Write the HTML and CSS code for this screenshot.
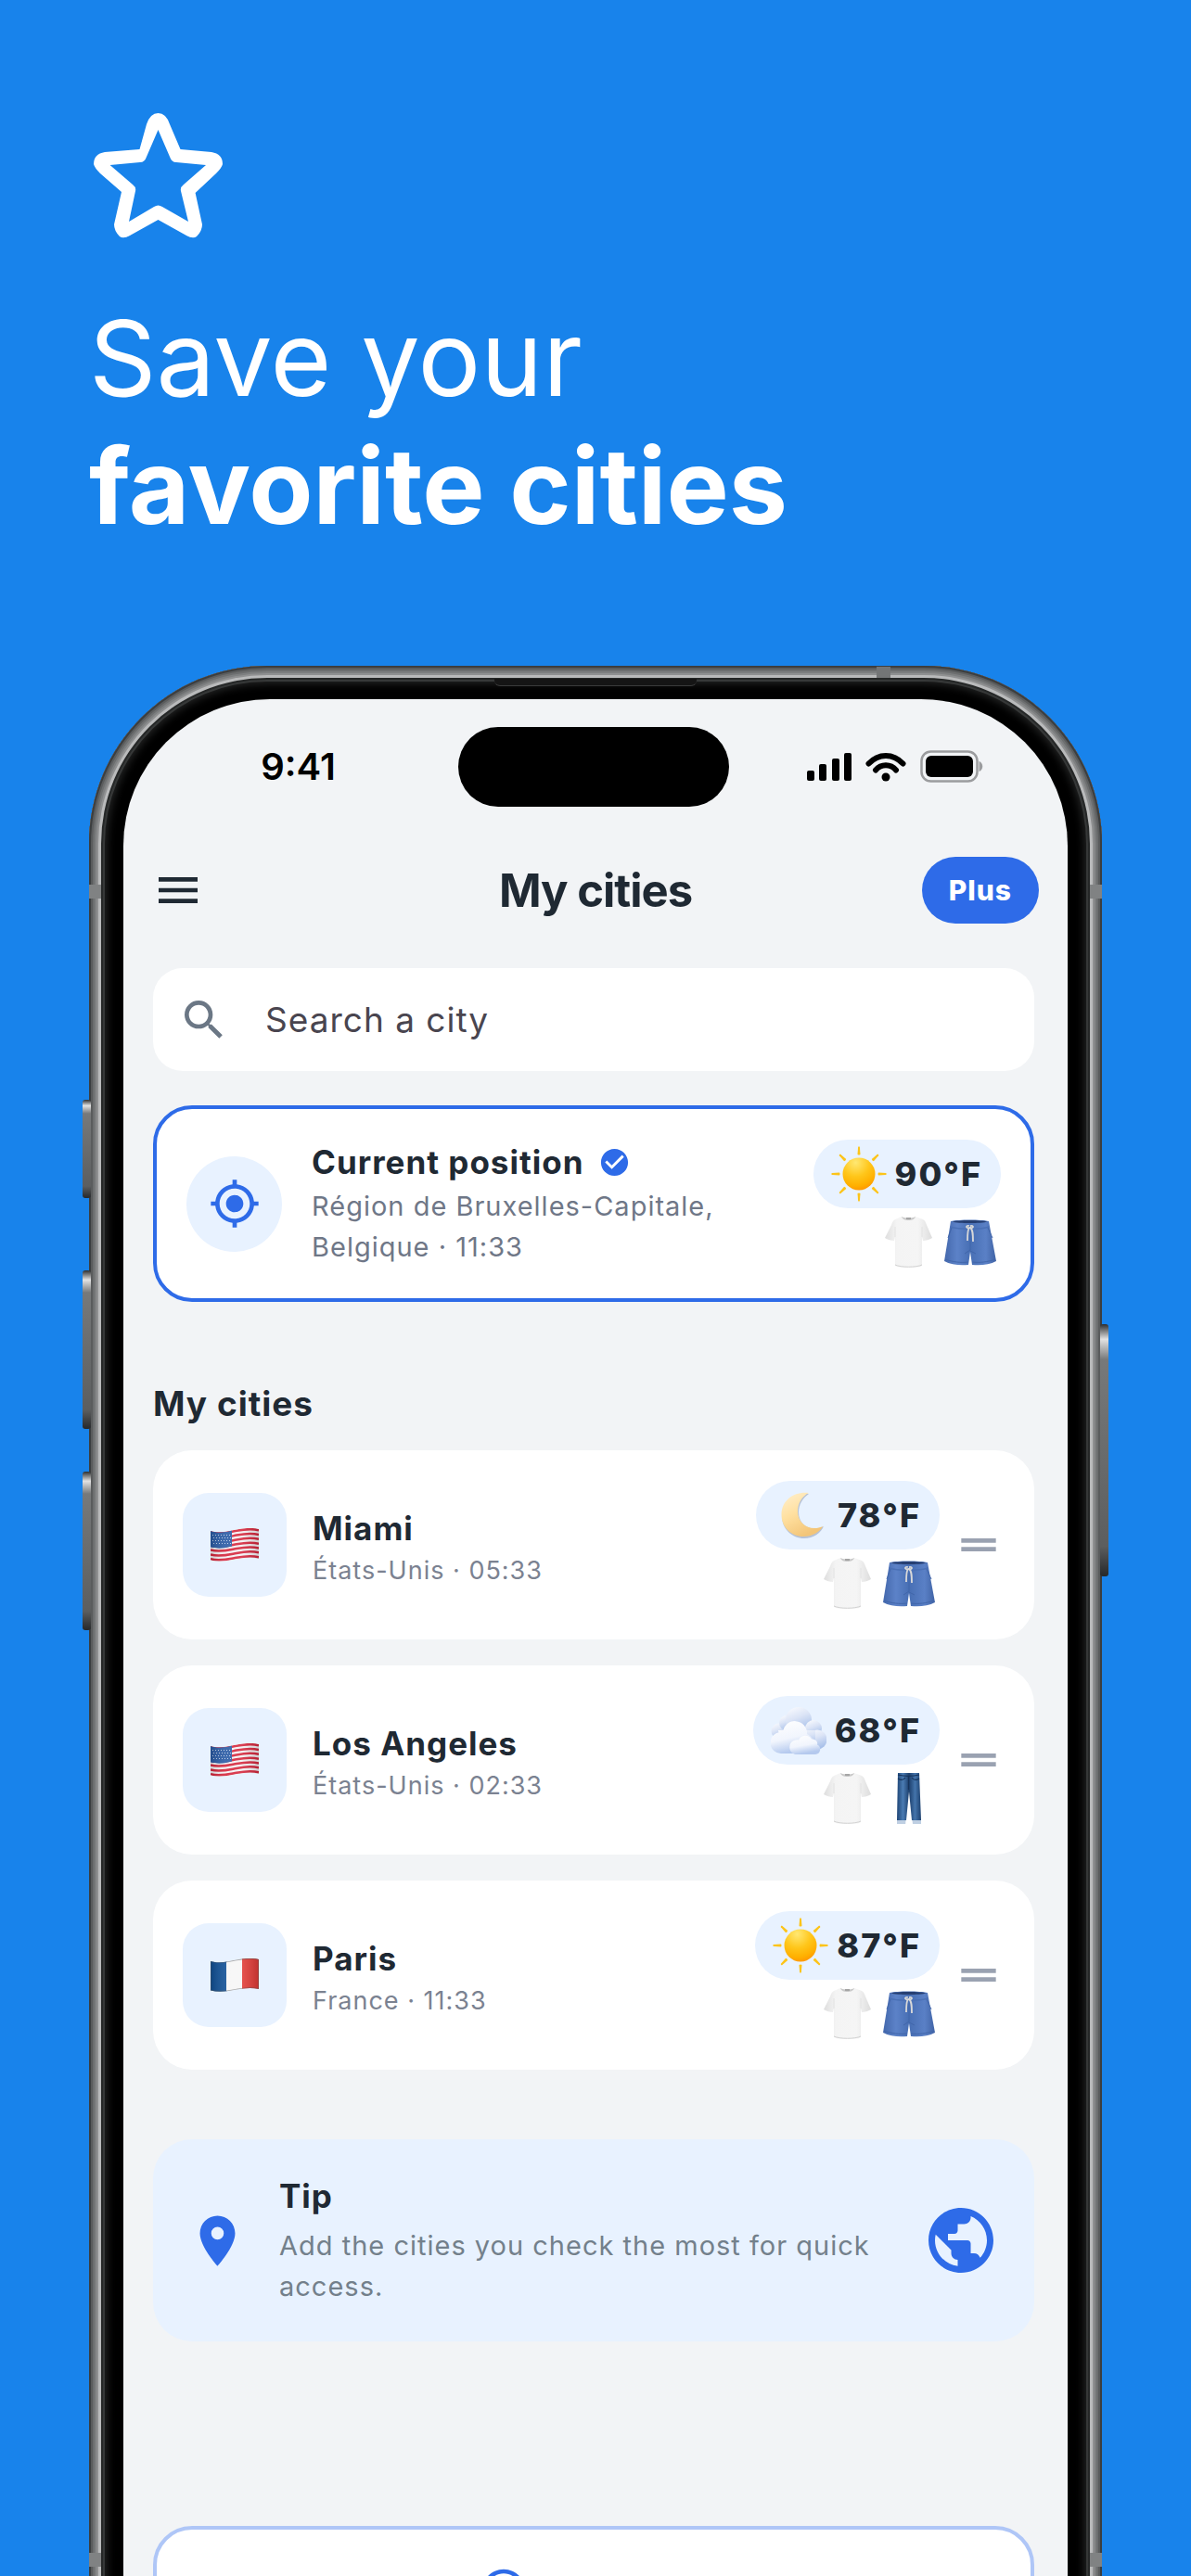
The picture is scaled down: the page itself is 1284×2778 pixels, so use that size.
FILE: index.html
```html
<!DOCTYPE html>
<html lang="en">
<head>
<meta charset="utf-8">
<meta name="viewport" content="width=device-width, initial-scale=1">
<title>Save your favorite cities</title>
<link rel="stylesheet" href="styles.css">
</head>
<body>
<svg class="sprite" aria-hidden="true">
  <defs>
    <radialGradient id="sun-fill" cx="0.4" cy="0.15" r="0.95">
      <stop offset="0" stop-color="#ffe873"/><stop offset="0.45" stop-color="#ffc61a"/><stop offset="0.75" stop-color="#ffb000"/><stop offset="1" stop-color="#ff8a00"/>
    </radialGradient>
    <linearGradient id="moon-fill" x1="0" y1="0" x2="0.5" y2="1">
      <stop offset="0" stop-color="#fff0cf"/><stop offset="0.5" stop-color="#ffe0a0"/><stop offset="1" stop-color="#f3c578"/>
    </linearGradient>
    <linearGradient id="cloud-back" x1="0" y1="0" x2="0.4" y2="1">
      <stop offset="0" stop-color="#fdfdff"/><stop offset="0.5" stop-color="#dbe4f6"/><stop offset="1" stop-color="#a9c1ea"/>
    </linearGradient>
    <linearGradient id="cloud-front" x1="0" y1="0" x2="0.3" y2="1">
      <stop offset="0" stop-color="#ffffff"/><stop offset="0.6" stop-color="#f1f5fd"/><stop offset="1" stop-color="#b4c9ee"/>
    </linearGradient>
    <linearGradient id="shirt-fill" x1="0" y1="0" x2="1" y2="0">
      <stop offset="0" stop-color="#dedede"/><stop offset="0.25" stop-color="#f4f4f4"/><stop offset="0.7" stop-color="#f5f5f5"/><stop offset="1" stop-color="#dddddd"/>
    </linearGradient>
    <linearGradient id="shorts-fill" x1="0" y1="0" x2="1" y2="0">
      <stop offset="0" stop-color="#4468ac"/><stop offset="0.25" stop-color="#5c82c8"/><stop offset="0.5" stop-color="#486fb4"/><stop offset="0.8" stop-color="#5a80c6"/><stop offset="1" stop-color="#4063a5"/>
    </linearGradient>
    <linearGradient id="jeans-fill" x1="0" y1="0" x2="1" y2="0">
      <stop offset="0" stop-color="#1f4576"/><stop offset="0.25" stop-color="#4a7bb2"/><stop offset="0.5" stop-color="#1d406e"/><stop offset="0.75" stop-color="#4373aa"/><stop offset="1" stop-color="#1d416f"/>
    </linearGradient>
    <linearGradient id="flag-shade" x1="0" y1="0" x2="1" y2="0">
      <stop offset="0" stop-color="#000" stop-opacity="0.15"/><stop offset="0.3" stop-color="#fff" stop-opacity="0.1"/><stop offset="0.65" stop-color="#fff" stop-opacity="0.12"/><stop offset="1" stop-color="#000" stop-opacity="0.15"/>
    </linearGradient>
    <clipPath id="flag-clip"><path d="M0 3c10 3 20 0 28-1.500s16-2.500 24-.5V33c-8-2-16-1-24 .5S10 37 0 34.500z"/></clipPath>
  </defs>

  <symbol id="sun" viewBox="0 0 60 60">
    <circle cx="30" cy="30" r="17.500" fill="url(#sun-fill)"/>
    <g fill="#fcc419">
      <path id="ray" d="M28.500 9l.6-8q.9-1.500 1.800 0l.6 8q-1.500 1-3 0z"/>
      <use href="#ray" transform="rotate(45 30 30)"/><use href="#ray" transform="rotate(90 30 30)"/>
      <use href="#ray" transform="rotate(135 30 30)"/><use href="#ray" transform="rotate(180 30 30)"/>
      <use href="#ray" transform="rotate(225 30 30)"/><use href="#ray" transform="rotate(270 30 30)"/>
      <use href="#ray" transform="rotate(315 30 30)"/>
    </g>
  </symbol>

  <symbol id="moon" viewBox="0 0 60 60">
    <path d="M38 7C24 5 9 14 9 31c0 14 11 24 24 24 10 0 18-6 21-13-13 7-27-1-27-15C27 18 32 11 38 7z" fill="#8d9ab5" opacity="0.55"/>
    <path d="M38 6C23 4 8.500 13 8.500 29.500 8.500 43 19 53 32 53c10 0 18-5 21-11-13 6-27-2-27-16 0-9 5-17 12-20z" fill="url(#moon-fill)"/>
  </symbol>

  <symbol id="cloud" viewBox="0 0 60 60">
    <g fill="url(#cloud-back)">
      <circle cx="9" cy="31" r="8.500"/><circle cx="17" cy="22" r="8"/><circle cx="30" cy="19" r="14"/>
      <circle cx="46" cy="28" r="9"/><circle cx="50" cy="40" r="10.500"/><path d="M8 30h40v20H12z"/>
    </g>
    <path d="M12 55a11.500 11.500 0 0 1-2-23c1 0 2 0 3 .3A13 13 0 0 1 39 34c6 3 9 8 7 13s-5 8-9 8z" fill="url(#cloud-front)"/>
    <path d="M26 56a8 8 0 0 1-1-15c2-1 4-1 5-.5a8 8 0 0 1 14-1c5-.5 7 4 6 6a5.500 5.500 0 0 1-2 10.500z" fill="url(#cloud-front)"/>
  </symbol>

  <symbol id="shirt" viewBox="0 0 56 56">
    <path d="M20 1c4 2 11 2 15 0l8 3c2 1 3 3 4 6l6 14c-3 2-7 3-10 3l-1-4v30c0 2-2 3-14 3s-15-1-15-3V23l-1 4c-3 0-7-1-10-3L9 10c1-3 2-5 4-6z" fill="url(#shirt-fill)"/>
    <path d="M20 1c4 2 11 2 15 0-1 3-4 4-7.500 4S21 4 20 1z" fill="#c9c9c9"/>
    <path d="M25 2h5v2h-5z" fill="#a5a5a5"/>
    <path d="M13 12v11M42 12v11" stroke="#e2e2e2" fill="none"/>
    <path d="M13 53c6 3 23 3 29 0" stroke="#d2d2d2" fill="none"/>
  </symbol>

  <symbol id="shorts" viewBox="0 0 56 56">
    <path d="M7 6c8-2 33-2 41 0l8 43c-7 4-17 5-26 4l-2-14-2 14c-9 1-19 0-26-4z" fill="url(#shorts-fill)"/>
    <path d="M8 6.500c8-2 31-2 39 0-8 2-31 2-39 0z" fill="#263f72"/>
    <path d="M6.500 12c9 3 33 3 42 0" stroke="#4a70b6" stroke-width="1.500" fill="none"/>
    <path d="M8 13L4 24M47 13l5 11M28 17v20l-6 4M28 38l6 3" stroke="#4166aa" fill="none"/>
    <path d="M1 47c8 3 17 4 25 3M30 50c8 1 17 0 25-3" stroke="#4166aa" fill="none"/>
    <path d="M27 11c-4-1-4 3 0 2-2 2-2 8-2 14M28 11c4-1 4 3 0 2 3 2 3 8 3 15" stroke="#d8d8d8" stroke-width="1.800" fill="none"/>
  </symbol>

  <symbol id="jeans" viewBox="0 0 56 56">
    <path d="M16 1h23l2 51H31l-3-31-3 31H15z" fill="url(#jeans-fill)"/>
    <path d="M16 3c8 2 15 2 23 0M27.500 4v15M16 7c3 2 6 2 8-1M39 7c-3 2-6 2-8-1" stroke="#16335b" stroke-width="1.200" fill="none"/>
    <path d="M15 52h9.500l-.3 4H15zM31.500 52H41v4h-9z" fill="#bfcfe2"/>
  </symbol>

  <symbol id="flag-us" viewBox="0 0 52 37">
    <g clip-path="url(#flag-clip)">
      <path d="M0 0h52v37H0z" fill="#f4f1f3"/>
      <g fill="none" stroke="#d5253b" stroke-width="2.500">
        <path d="M0 4.200c10 3 20 0 28-1.500s16-2.500 24-.5"/><path d="M0 9.100c10 3 20 0 28-1.500s16-2.500 24-.5"/>
        <path d="M0 13.900c10 3 20 0 28-1.500s16-2.500 24-.5"/><path d="M0 18.700c10 3 20 0 28-1.500s16-2.500 24-.5"/>
        <path d="M0 23.500c10 3 20 0 28-1.500s16-2.500 24-.5"/><path d="M0 28.400c10 3 20 0 28-1.500s16-2.500 24-.5"/>
        <path d="M0 33.200c10 3 20 0 28-1.500s16-2.500 24-.5"/>
      </g>
      <path d="M0 3c10 3 17 1 23-.5v17C17 21 10 23 0 20.500z" fill="#2a5ba5"/>
      <path d="M2 7.500h20M3 10.500h20M2 13.500h20M3 16.500h20" stroke="#b9cbe6" stroke-dasharray="1 2" fill="none"/>
      <path d="M0 0h52v37H0z" fill="url(#flag-shade)"/>
    </g>
  </symbol>

  <symbol id="flag-fr" viewBox="0 0 52 37">
    <g clip-path="url(#flag-clip)">
      <path d="M0 0h18v37H0z" fill="#0f4f95"/><path d="M17 0h18v37H17z" fill="#f6f6f6"/><path d="M34 0h18v37H34z" fill="#e23b36"/>
      <path d="M0 0h52v37H0z" fill="url(#flag-shade)"/>
      <path d="M0 3c10 3 20 0 28-1.500s16-2.500 24-.5V33c-8-2-16-1-24 .5S10 37 0 34.500z" fill="none" stroke="#555" stroke-opacity="0.5" stroke-width="1.500"/>
    </g>
  </symbol>

  <symbol id="drag" viewBox="0 0 24 24"><path d="M20 9H4v2h16V9zM4 15h16v-2H4v2z"/></symbol>
</svg>

<div class="poster">
  <header class="intro">
    <svg class="star" viewBox="100 121 141 136" aria-hidden="true">
      <path fill="#fff" fill-rule="evenodd" d="M150.500 161L158 134Q162 122 170.500 122T183 134L194.500 161L228 164Q240 166 240 177Q239 181 233 187L210.600 208L218 242Q218 249 212 255Q208 258 201 254L170.500 237L140 254Q133 258 129 255Q123 249 123 242L131 207L108 187Q102 181 101 177Q101 166 113 164ZM170.500 140L158 169Q156 175 151 175L118.600 178L143 199Q147 202 146 206L139 239L166 223Q170.500 220 175 223L203 239L195 206Q194 202 198 199L222 178L190 175Q185 175 183 169Z"/>
    </svg>
    <h1 class="headline">Save your<br><strong>favorite cities</strong></h1>
  </header>

  <div class="phone">
    <span class="key key-action"></span>
    <span class="key key-up"></span>
    <span class="key key-down"></span>
    <span class="key key-power"></span>
    <span class="band band-left"></span>
    <span class="band band-right"></span>
    <span class="band band-left band-low"></span>
    <span class="band band-right band-low"></span>
    <span class="band band-top"></span>
    <span class="earpiece"></span>

    <div class="screen">
      <div class="status">
        <span class="clock">9:41</span>
        <span class="island"></span>
        <span class="signals">
          <svg width="48" height="32" viewBox="0 0 48 32" aria-hidden="true"><rect y="20" width="8" height="11" rx="2"/><rect x="13" y="13" width="8" height="18" rx="2"/><rect x="27" y="7" width="8" height="24" rx="2"/><rect x="40" y="1" width="8" height="30" rx="2"/></svg>
          <svg width="44" height="32" viewBox="0 0 44 32" fill="none" stroke="#000" stroke-width="6" stroke-linecap="round" aria-hidden="true"><path d="M3.500 12.500C14 1 30 1 40.500 12.500M11 19.500c6-7 16-7 22 0"/><circle cx="22" cy="27" r="4.500" fill="#000" stroke="none"/></svg>
          <svg width="68" height="36" viewBox="0 0 68 36" aria-hidden="true"><rect x="1.500" y="1.500" width="60" height="32" rx="10" fill="none" stroke="#9b9c9e" stroke-width="2.500"/><rect x="6" y="6" width="51" height="23" rx="6"/><path d="M63.500 12c5 1.500 5 9.500 0 11z" fill="#9b9c9e"/></svg>
        </span>
      </div>

      <div class="topbar">
        <button class="menu" type="button" aria-label="Menu"><svg class="icon" viewBox="0 0 24 24"><path d="M3 18h18v-2H3v2zm0-5h18v-2H3v2zm0-7v2h18V6H3z"/></svg></button>
        <h2 class="title">My cities</h2>
        <button class="plus" type="button">Plus</button>
      </div>

      <main class="content">
        <label class="search">
          <svg class="icon" viewBox="0 0 24 24" aria-hidden="true"><path d="M15.500 14h-.79l-.28-.27A6.471 6.471 0 0 0 16 9.500 6.500 6.500 0 1 0 9.500 16c1.610 0 3.090-.59 4.230-1.570l.27.28v.79l5 4.990L20.490 19l-4.990-5zm-6 0C7.010 14 5 11.990 5 9.500S7.010 5 9.500 5 14 7.010 14 9.500 11.990 14 9.500 14z"/></svg>
          <input class="field" type="text" placeholder="Search a city" aria-label="Search a city">
        </label>

        <article class="card current">
          <span class="locate"><svg class="icon" viewBox="0 0 24 24" aria-hidden="true"><path d="M12 8c-2.210 0-4 1.790-4 4s1.790 4 4 4 4-1.790 4-4-1.790-4-4-4zm8.940 3A8.994 8.994 0 0 0 13 3.060V1h-2v2.060A8.994 8.994 0 0 0 3.060 11H1v2h2.060A8.994 8.994 0 0 0 11 20.940V23h2v-2.060A8.994 8.994 0 0 0 20.940 13H23v-2h-2.060zM12 19c-3.870 0-7-3.130-7-7s3.130-7 7-7 7 3.130 7 7-3.130 7-7 7z"/></svg></span>
          <div class="place">
            <h3 class="name">Current position
              <svg class="check" viewBox="0 0 24 24" aria-hidden="true"><path d="M12 2C6.480 2 2 6.480 2 12s4.480 10 10 10 10-4.480 10-10S17.520 2 12 2zm-2 15l-5-5 1.410-1.410L10 14.170l7.590-7.590L19 8l-9 9z"/></svg>
            </h3>
            <p class="detail">Région de Bruxelles-Capitale, Belgique · 11:33</p>
          </div>
          <div class="weather">
            <span class="temp"><svg class="sky"><use href="#sun"/></svg>90°F</span>
            <span class="outfit"><svg class="cloth"><use href="#shirt"/></svg><svg class="cloth"><use href="#shorts"/></svg></span>
          </div>
        </article>

        <h2 class="section">My cities</h2>
        <ul class="list">
          <li class="card">
            <span class="tile"><svg class="flag"><use href="#flag-us"/></svg></span>
            <div class="place"><h3 class="name">Miami</h3><p class="zone">États-Unis · 05:33</p></div>
            <div class="weather">
              <span class="temp"><svg class="sky"><use href="#moon"/></svg>78°F</span>
              <span class="outfit"><svg class="cloth"><use href="#shirt"/></svg><svg class="cloth"><use href="#shorts"/></svg></span>
            </div>
            <button class="grip" type="button" aria-label="Move Miami"><svg class="icon"><use href="#drag"/></svg></button>
          </li>
          <li class="card">
            <span class="tile"><svg class="flag"><use href="#flag-us"/></svg></span>
            <div class="place"><h3 class="name">Los Angeles</h3><p class="zone">États-Unis · 02:33</p></div>
            <div class="weather">
              <span class="temp"><svg class="sky"><use href="#cloud"/></svg>68°F</span>
              <span class="outfit"><svg class="cloth"><use href="#shirt"/></svg><svg class="cloth"><use href="#jeans"/></svg></span>
            </div>
            <button class="grip" type="button" aria-label="Move Los Angeles"><svg class="icon"><use href="#drag"/></svg></button>
          </li>
          <li class="card">
            <span class="tile"><svg class="flag"><use href="#flag-fr"/></svg></span>
            <div class="place"><h3 class="name">Paris</h3><p class="zone">France · 11:33</p></div>
            <div class="weather">
              <span class="temp"><svg class="sky"><use href="#sun"/></svg>87°F</span>
              <span class="outfit"><svg class="cloth"><use href="#shirt"/></svg><svg class="cloth"><use href="#shorts"/></svg></span>
            </div>
            <button class="grip" type="button" aria-label="Move Paris"><svg class="icon"><use href="#drag"/></svg></button>
          </li>
        </ul>

        <aside class="tip">
          <svg class="pin" viewBox="0 0 24 24" aria-hidden="true"><path d="M12 2C8.130 2 5 5.130 5 9c0 5.250 7 13 7 13s7-7.750 7-13c0-3.870-3.130-7-7-7zm0 9.500a2.500 2.500 0 0 1 0-5 2.500 2.500 0 0 1 0 5z"/></svg>
          <div class="advice">
            <h3 class="name">Tip</h3>
            <p class="detail">Add the cities you check the most for quick access.</p>
          </div>
          <svg class="globe" viewBox="0 0 24 24" aria-hidden="true"><path d="M12 2C6.480 2 2 6.480 2 12s4.480 10 10 10 10-4.480 10-10S17.520 2 12 2zm-1 17.930c-3.950-.49-7-3.850-7-7.930 0-.62.080-1.210.210-1.790L9 15v1c0 1.100.9 2 2 2v1.930zm6.900-2.540c-.26-.81-1-1.390-1.900-1.390h-1v-3c0-.55-.45-1-1-1H8v-2h2c.55 0 1-.45 1-1V7h2c1.100 0 2-.9 2-2v-.41c2.930 1.190 5 4.060 5 7.410 0 2.080-.8 3.970-2.100 5.390z"/></svg>
        </aside>

        <button class="add" type="button" aria-label="Add a city"><svg class="icon" viewBox="0 0 24 24"><path d="M13 7h-2v4H7v2h4v4h2v-4h4v-2h-4V7zm-1-5C6.480 2 2 6.480 2 12s4.480 10 10 10 10-4.480 10-10S17.520 2 12 2zm0 18c-4.410 0-8-3.590-8-8s3.590-8 8-8 8 3.590 8 8-3.590 8-8 8z"/></svg></button>
      </main>
    </div>
  </div>
</div>
</body>
</html>
```

FILE: styles.css
```css
* { box-sizing: border-box; margin: 0; padding: 0; }

body { background: #1883eb; font-family: Inter, "Liberation Sans", sans-serif; color: #1f2933; }
button { border: 0; background: none; font: inherit; color: inherit; cursor: pointer; }
svg { display: block; flex: none; }

.sprite { position: absolute; width: 0; height: 0; }
.icon { width: 56px; height: 56px; fill: currentColor; }

/* The phone runs past the lower edge of the poster. */
.poster { display: flex; flex-direction: column; height: 100vh; padding: 121px 96px 0; overflow: hidden; }

.intro { display: flex; flex-direction: column; gap: 60px; padding-bottom: 125px; color: #fff; }
.star { width: 141px; height: 136px; margin-left: 4px; }
.headline { font-size: 113px; line-height: 138px; font-weight: 400; }
.headline strong { font-weight: 700; }

/* Phone body */
.phone {
  position: relative;
  flex: none;
  padding: 36px 37px 0;
  border-radius: 192px 192px 0 0;
  background: #000;
  box-shadow:
    inset 0 0 0 2px #3b3e40,
    inset 0 0 0 4px #5a5c5d,
    inset 0 0 0 6px #6c6e6f,
    inset 0 0 0 8px #7d7f80,
    inset 0 0 0 10px #8f9091,
    inset 0 0 0 13px #b9babb,
    inset 0 0 0 15px #252727,
    inset 0 0 0 17px #363838,
    inset 0 0 10px 19px #262727;
}
.key { position: absolute; width: 9px; border-radius: 3px; left: -7px; background: linear-gradient(#2c2e2f, #e2e2e2 6%, #77797a 14%, #5c5e5f 88%, #26282a); }
.key-action { top: 468px; height: 106px; }
.key-up { top: 652px; height: 171px; }
.key-down { top: 869px; height: 171px; }
.key-power { top: 710px; height: 272px; left: auto; right: -7px; }
.band { position: absolute; top: 236px; width: 13px; height: 15px; background: #808283; }
.band-left { left: 0; }
.band-right { right: 0; }
.band-low { top: 2035px; }
.band-top { top: 1px; left: 849px; width: 15px; height: 12px; background: #737576; }
.earpiece { position: absolute; top: 14px; left: 50%; width: 218px; height: 8px; margin-left: -109px; border-radius: 0 0 6px 6px; border-bottom: 1px solid #3a3b3b; background: #151515; }

.screen { position: relative; padding-top: 30px; border-radius: 158px 158px 0 0; background: #f2f4f6; }

/* Status bar */
.status { display: grid; grid-template-columns: 1fr 292px 1fr; align-items: center; padding-right: 4px; }
.clock { padding-left: 16px; text-align: center; font-size: 40px; line-height: 48px; font-weight: 600; color: #000; }
.island { height: 86px; border-radius: 43px; background: #000; }
.signals { display: flex; align-items: center; justify-content: center; gap: 15px; padding-right: 4px; }

/* App bar */
.topbar { display: grid; grid-template-columns: 1fr auto 1fr; align-items: center; padding: 54px 31px 48px; }
.menu { justify-self: start; }
.title { padding-top: 2px; font-size: 49px; line-height: 56px; font-weight: 700; letter-spacing: -1px; }
.plus { justify-self: end; height: 72px; padding: 0 29px; border-radius: 36px; background: #2e6be8; color: #fff; font-size: 30px; font-weight: 800; letter-spacing: 1px; }

.content { display: flex; flex-direction: column; padding: 0 36px 0 32px; }

.search { display: flex; align-items: center; gap: 38px; height: 111px; padding: 0 27px; border-radius: 32px; background: #fff; color: #6b7785; }
.field { flex: 1; min-width: 0; border: 0; outline: 0; background: none; font: inherit; font-size: 37px; letter-spacing: 1px; color: #1f2933; }
.field::placeholder { color: #49454f; opacity: 1; }

/* Place cards */
.card { display: flex; align-items: center; padding: 33px 32px; border-radius: 42px; background: #fff; }
.current { margin-top: 37px; border: 4px solid #2e6be8; }
.locate { display: grid; place-items: center; flex: none; width: 103px; height: 103px; border-radius: 50%; background: #e8f2ff; color: #2e6be8; }
.place { flex: 1; min-width: 0; padding: 2px 0 0 32px; }
.list .place { display: grid; gap: 11px; padding-left: 28px; }
.name { display: flex; align-items: center; gap: 15px; font-size: 35px; line-height: 44px; font-weight: 700; letter-spacing: 1px; }
.list .name { line-height: 42px; }
.check { width: 35px; height: 35px; fill: #2e6be8; }
.detail { margin-top: 4px; font-size: 29px; line-height: 44px; letter-spacing: 1px; color: #6f7787; }
.zone { font-size: 27px; line-height: 28px; letter-spacing: 1px; color: #7b8291; }

.weather { display: flex; flex-direction: column; align-items: flex-end; gap: 8px; }
.temp { display: flex; align-items: center; gap: 9px; height: 74px; padding: 0 20px 0 19px; border-radius: 37px; background: #e8f2ff; font-size: 36px; font-weight: 800; letter-spacing: 2px; }
.sky { width: 60px; height: 60px; }
.outfit { display: flex; gap: 10px; padding-right: 5px; }
.cloth { width: 56px; height: 56px; }

.section { margin: 88px 0 28px; font-size: 37px; line-height: 44px; font-weight: 700; letter-spacing: 1px; }
.list { display: grid; gap: 28px; list-style: none; }
.tile { display: grid; place-items: center; flex: none; width: 112px; height: 112px; border-radius: 28px; background: #e8f2ff; }
.flag { width: 52px; height: 37px; }
.grip { margin-left: 14px; color: #9aa2b1; }

/* Tip */
.tip { display: flex; align-items: center; margin-top: 75px; padding: 37px; border-radius: 42px; background: #e8f2ff; }
.pin { width: 65px; height: 65px; fill: #2e6be8; }
.advice { flex: 1; padding: 2px 32px 0 34px; }
.advice .detail { margin-top: 10px; color: #73808b; }
.globe { width: 84px; height: 84px; fill: #2e6be8; }

.add { height: 140px; margin-top: 199px; padding-left: 346px; border: 4px solid #afc6f7; border-radius: 42px; background: #fff; color: #2e6be8; }
```
